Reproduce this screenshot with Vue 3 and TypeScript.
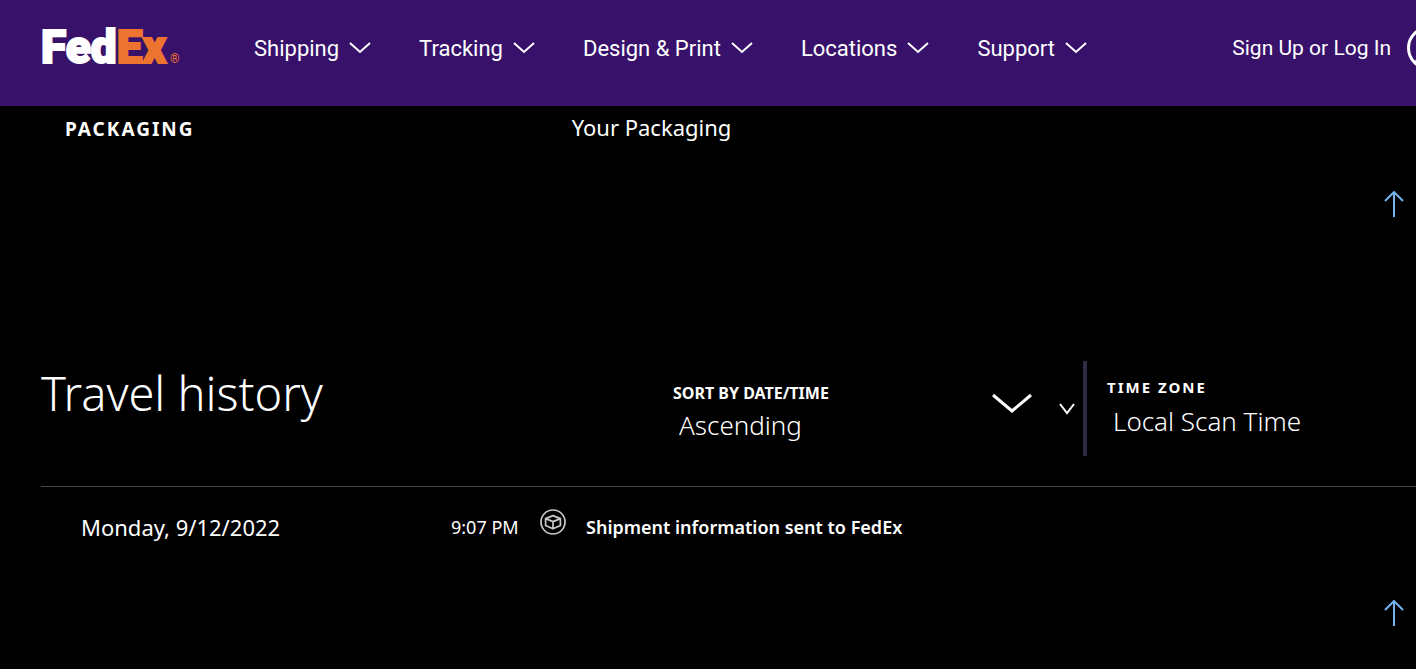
<script setup lang="ts">
import { ref } from 'vue'

interface ScanEvent {
  date: string
  time: string
  status: string
}

const menus: string[] = ['Shipping', 'Tracking', 'Design & Print', 'Locations', 'Support']
const events: ScanEvent[] = [
  { date: 'Monday, 9/12/2022', time: '9:07 PM', status: 'Shipment information sent to FedEx' },
]
const sortOrder = ref('Ascending')
const timeZone = ref('Local Scan Time')
</script>

<template>
  <div class="page">
    <header class="header">
      <a class="logo" href="#" aria-label="FedEx home">
        <span class="logo-fed">Fed</span><span class="logo-ex">Ex</span><span class="logo-mark">®</span>
      </a>
      <nav class="nav" aria-label="Main">
        <button v-for="menu in menus" :key="menu" type="button" class="nav-item">
          {{ menu }}
          <svg class="nav-chevron" viewBox="0 0 22 12" aria-hidden="true"><path d="M1 1l10 9L21 1" /></svg>
        </button>
      </nav>
      <a class="account" href="#">
        Sign Up or Log In
        <svg class="avatar" viewBox="0 0 44 44" aria-hidden="true">
          <circle cx="22" cy="22" r="20.5" />
          <circle cx="22" cy="17" r="7" />
          <path d="M9 37c2-7 7-10 13-10s11 3 13 10" />
        </svg>
      </a>
    </header>

    <main class="content">
      <dl class="facts">
        <dt>PACKAGING</dt>
        <dd>Your Packaging</dd>
      </dl>
      <a class="to-top" href="#" aria-label="Back to top">
        <svg viewBox="0 0 20 26" aria-hidden="true"><path d="M10 26V1M1 10l9-9 9 9" /></svg>
      </a>

      <section class="history">
        <div class="history-head">
          <h2>Travel history</h2>
          <div class="field sort">
            <label for="sort">SORT BY DATE/TIME</label>
            <select id="sort" v-model="sortOrder">
              <option>Ascending</option>
              <option>Descending</option>
            </select>
            <svg class="chevron-large" viewBox="0 0 40 20" aria-hidden="true"><path d="M1 2l19 16L39 2" /></svg>
            <svg class="chevron-small" viewBox="0 0 16 12" aria-hidden="true"><path d="M1 1l7 9 7-9" /></svg>
          </div>
          <div class="field zone">
            <label for="zone">TIME ZONE</label>
            <select id="zone" v-model="timeZone">
              <option>Local Scan Time</option>
            </select>
          </div>
        </div>
        <ol class="events">
          <li v-for="event in events" :key="event.date + event.time">
            <span class="date">{{ event.date }}</span>
            <span class="time">{{ event.time }}</span>
            <svg class="box-icon" viewBox="0 0 26 26" aria-hidden="true">
              <circle cx="13" cy="13" r="12" />
              <path d="M13 6.6l7.4 3v6.8L13 19.8l-7.4-3.4V9.6zM5.6 9.6l7.4 3 7.4-3M13 12.6v7.2" />
            </svg>
            <strong class="status">{{ event.status }}</strong>
          </li>
        </ol>
      </section>
      <a class="to-top" href="#" aria-label="Back to top">
        <svg viewBox="0 0 20 26" aria-hidden="true"><path d="M10 26V1M1 10l9-9 9 9" /></svg>
      </a>
    </main>
  </div>
</template>

<style>
body {
  margin: 0;
  background: #000;
}
</style>

<style scoped>
.page {
  min-height: 100vh;
  overflow: hidden;
  background: #000;
  color: #fff;
  font-family: "Noto Sans", "Open Sans", sans-serif;
}

svg {
  display: block;
  flex: none;
  fill: none;
  stroke: currentColor;
}

a {
  color: inherit;
  text-decoration: none;
}

.header {
  display: flex;
  align-items: center;
  height: 96px;
  padding: 0 0 10px 41px;
  background: #38126a;
  font-family: Roboto, sans-serif;
  font-size: 22px;
}

.logo {
  display: flex;
  align-items: baseline;
  width: 213px;
  padding-top: 10px;
  font-size: 46px;
  font-weight: 900;
  line-height: 56px;
  -webkit-text-stroke: 2px currentColor;
}

.logo-ex,
.logo-mark {
  color: #ed7430;
}

.logo-mark {
  margin-left: 4px;
  font-size: 12px;
  font-weight: 400;
  -webkit-text-stroke: 0;
}

.nav {
  display: flex;
  gap: 48px;
}

.nav-item {
  display: flex;
  align-items: center;
  gap: 10px;
  padding: 0;
  border: 0;
  background: none;
  color: inherit;
  font: inherit;
  white-space: nowrap;
  cursor: pointer;
}

.nav-chevron {
  width: 22px;
  height: 12px;
  stroke-width: 2;
}

.account {
  display: flex;
  align-items: center;
  gap: 16px;
  margin-left: auto;
  margin-right: -35px;
  font-size: 21px;
  white-space: nowrap;
}

.avatar {
  width: 44px;
  height: 44px;
  stroke-width: 3;
}

.content {
  padding-left: 41px;
}

.facts {
  display: grid;
  grid-template-columns: 3fr 5fr;
  align-items: baseline;
  margin: 0;
  padding: 7px 0 0 24px;
  line-height: 28px;
}

.facts dt {
  font-size: 19px;
  font-weight: 700;
  letter-spacing: 2px;
}

.facts dd {
  margin: 0;
  font-size: 22px;
}

.to-top {
  display: block;
  width: 20px;
  margin: 48px 12px 0 auto;
  color: #74b3ee;
}

.to-top svg {
  width: 20px;
  height: 26px;
  stroke-width: 2;
}

.history {
  margin-top: 144px;
}

.history-head {
  display: grid;
  grid-template-columns: 632fr 410fr 333fr;
  padding-bottom: 30px;
  border-bottom: 1px solid #444;
}

h2 {
  margin: 0;
  font-size: 47px;
  font-weight: 300;
  line-height: 64px;
}

.field {
  display: grid;
  align-content: start;
  line-height: 24px;
}

.field label {
  font-size: 16px;
  font-weight: 700;
}

.field select {
  appearance: none;
  width: 100%;
  padding: 0 0 0 6px;
  border: 0;
  background: none;
  color: inherit;
  font-family: inherit;
  font-size: 26px;
  font-weight: 300;
  line-height: 40px;
}

.sort {
  grid-template-columns: 319px 40px 27px 16px;
  padding-top: 20px;
}

.sort label {
  grid-area: 1 / 1 / 2 / -1;
}

.sort select {
  grid-area: 2 / 1 / 3 / -1;
}

.chevron-large,
.chevron-small {
  pointer-events: none;
}

.chevron-large {
  grid-area: 1 / 2 / 3 / 3;
  align-self: center;
  width: 40px;
  height: 20px;
  margin-bottom: 20px;
  stroke-width: 3;
}

.chevron-small {
  grid-area: 1 / 4 / 3 / 5;
  align-self: center;
  width: 16px;
  height: 12px;
  margin-bottom: 8px;
  stroke-width: 2;
}

.zone {
  row-gap: 2px;
  min-height: 81px;
  padding: 14px 0 0 20px;
  border-left: 4px solid #2d2b45;
}

.field.zone label {
  font-size: 15px;
  letter-spacing: 2px;
}

.events {
  margin: 0;
  padding: 0;
  list-style: none;
}

.events li {
  display: grid;
  grid-template-columns: 370px 89px 46px 1fr;
  padding: 22px 0 7px 40px;
  line-height: 36px;
}

.date {
  font-size: 22px;
}

.time,
.status {
  font-size: 18px;
}

.status {
  font-weight: 600;
}

.box-icon {
  width: 26px;
  height: 26px;
  color: #c8c8c8;
  stroke-width: 1.7;
  stroke-linejoin: round;
}
</style>
